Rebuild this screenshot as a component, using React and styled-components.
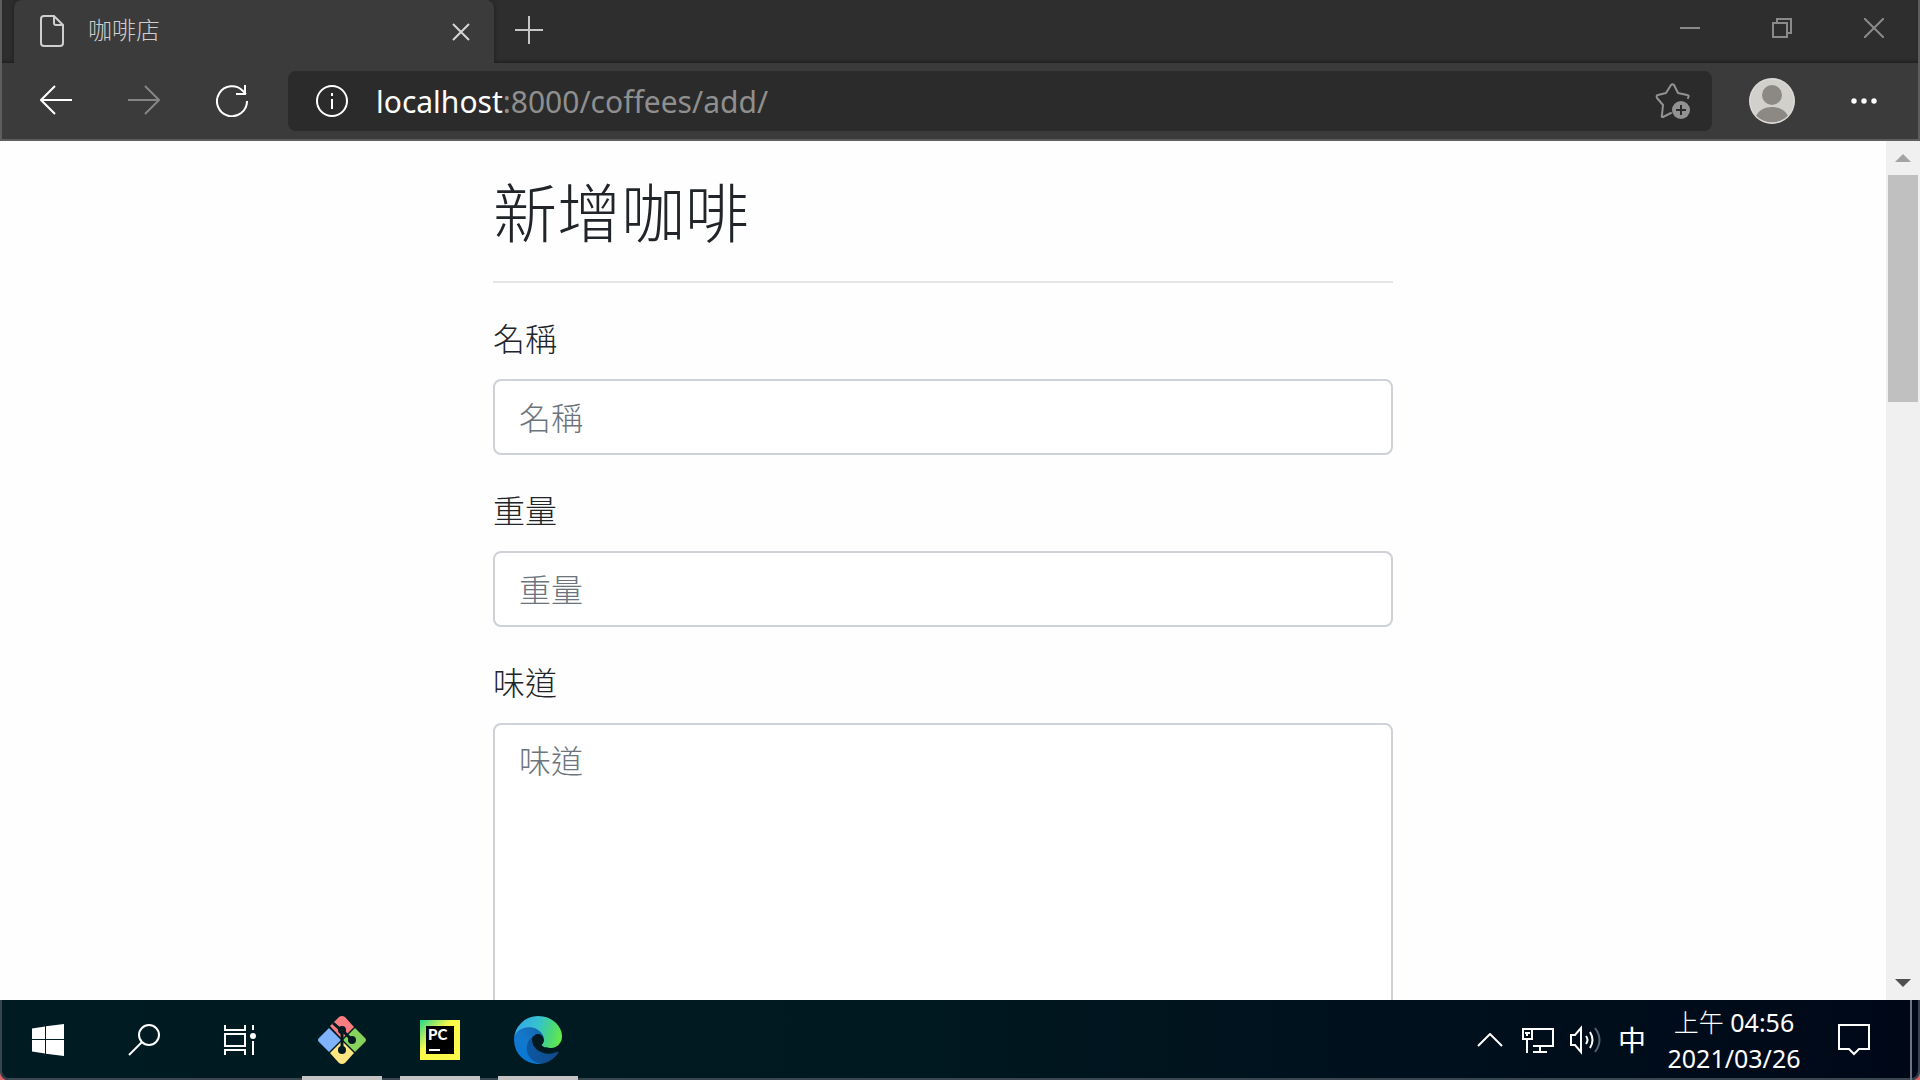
import React from 'react';
import styled, { createGlobalStyle } from 'styled-components';

const Global = createGlobalStyle`
  * { box-sizing: border-box; }
  body { margin: 0; background: #fff; font-family: "Noto Sans", "Noto Sans CJK TC", sans-serif; }
  button { border: 0; padding: 0; background: none; color: inherit; font: inherit; }
  svg { display: block; flex: none; }
`;

const Screen = styled.div`
  display: flex;
  flex-direction: column;
  height: 100vh;
  overflow: hidden;
  background: #e0646c;
`;

const Browser = styled.div`
  flex: 1;
  min-height: 0;
  display: flex;
  flex-direction: column;
`;

const Chrome = styled.header`
  background: #3b3b3b;
  border: solid #5e5e5e;
  border-width: 0 2px 2px;
`;

const TabStrip = styled.div`
  display: flex;
  height: 63px;
  padding-left: 12px;
  background: #2e2e2e;
  box-shadow: inset 0 -2px 2px #232323;
`;

const Tab = styled.div`
  display: flex;
  align-items: center;
  width: 480px;
  padding: 0 24px 0 26px;
  border-radius: 8px 8px 0 0;
  background: #3b3b3b;
  color: #cfcfcf;
  box-shadow: 0 0 4px #1c1c1c;
  clip-path: inset(0 -6px 0 -6px);
`;

const TabTitle = styled.span`
  flex: 1;
  margin: 0 0 6px 24px;
  font: 300 24px/32px "Noto Sans CJK TC Light", "Noto Sans CJK TC", sans-serif;
`;

const IconButton = styled.button`
  display: flex;
  align-items: center;
  justify-content: center;
  width: ${(p) => p.$width || 32}px;
  height: ${(p) => p.$height || 32}px;
  color: ${(p) => p.$color || '#fff'};
`;

const WindowButtons = styled.div`
  display: flex;
  gap: 4px;
  margin-left: auto;
`;

const Toolbar = styled.div`
  display: flex;
  align-items: center;
  height: 76px;
  padding: 0 38px;
`;

const Nav = styled.nav`
  display: flex;
  gap: 56px;
  margin-right: 40px;
`;

const AddressBar = styled.form`
  flex: 1;
  display: flex;
  align-items: center;
  height: 60px;
  margin-right: 37px;
  padding: 0 21px 0 28px;
  border-radius: 8px;
  background: #2b2b2b;
  color: #fff;
`;

const Url = styled.a`
  flex: 1;
  margin-left: 28px;
  padding-top: 2px;
  color: #8f8f8f;
  font-size: 30px;
  line-height: 40px;
  text-decoration: none;
`;

const Host = styled.span`
  color: #fff;
`;

const ToolbarActions = styled.div`
  display: flex;
  align-items: center;
  gap: 53px;
`;

const Viewport = styled.div`
  flex: 1;
  min-height: 0;
  display: flex;
  padding-right: 2px;
  background: #f0f0f0;
`;

const Page = styled.main`
  flex: 1;
  overflow: hidden;
  background: #fefefe;
`;

const Container = styled.form`
  width: 900px;
  margin: 0 auto;
  padding-top: 30px;
  color: #212529;
  font: 300 32px/48px "Noto Sans CJK TC Light", "Noto Sans CJK TC", sans-serif;
`;

const Title = styled.h1`
  margin: 0;
  padding-bottom: 34px;
  border-bottom: 2px solid #e4e5e5;
  font-size: 64px;
  font-weight: 300;
  line-height: 76px;
`;

const Group = styled.div`
  padding-top: 30px;
`;

const Label = styled.label`
  display: block;
  margin-bottom: 18px;
`;

const Input = styled.input`
  display: block;
  width: 100%;
  height: 76px;
  padding: 10px 24px 12px;
  border: 2px solid #ced1d5;
  border-radius: 8px;
  background: #fff;
  color: #495057;
  font: inherit;
  outline: none;
  &::placeholder { color: #6c757d; opacity: 1; }
`;

const TextArea = styled(Input)`
  height: 500px;
  resize: none;
`;

const ScrollBar = styled.aside`
  display: flex;
  flex-direction: column;
  width: 32px;
`;

const Thumb = styled.div`
  width: 30px;
  height: 227px;
  margin-left: 2px;
  margin-bottom: auto;
  background: #c0c0c0;
`;

const Taskbar = styled.footer`
  display: flex;
  height: 80px;
  padding-right: 6px;
  border: solid #38444e;
  border-width: 0 2px;
  border-radius: 0 0 8px 8px;
  background: linear-gradient(90deg, #001b22 0%, #001920 45%, #000f1c 78%, #000818 100%);
  box-shadow: inset 0 -2px #3a4650;
  color: #fff;
`;

const SystemButtons = styled.div`
  display: flex;
  margin-left: -2px;
`;

const Apps = styled.div`
  display: flex;
  gap: 18px;
  padding-left: 14px;
`;

const AppButton = styled(IconButton)`
  width: 80px;
  height: 80px;
  border-bottom: 4px solid #c4c4c4;
  padding-top: 4px;
`;

const Tray = styled.div`
  display: flex;
  align-items: center;
  margin-left: auto;
`;

const TrayIcons = styled.div`
  display: flex;
  align-items: center;
  gap: 16px;
`;

const Ime = styled.button`
  width: 28px;
  height: 80px;
  padding-bottom: 2px;
  font: 28px/78px "Noto Sans CJK TC", sans-serif;
`;

const Clock = styled.time`
  width: 134px;
  margin: 0 37px 0 21px;
  font: 25px/36px "Noto Sans", "Noto Sans CJK TC Light", "Noto Sans CJK TC", sans-serif;
  text-align: center;
  white-space: nowrap;
`;

const ShowDesktop = styled.button`
  width: 2px;
  height: 80px;
  margin-left: 40px;
  background: #6e7480;
`;

const Line = ({ w = 32, h = 32, children }) => (
  <svg width={w} height={h} viewBox={`0 0 ${w} ${h}`} fill="none" stroke="currentColor" strokeWidth="2" aria-hidden="true">
    {children}
  </svg>
);

const DocIcon = () => (
  <Line w={24} h={34}>
    <path d="M4 1h10l9 9v18a3 3 0 0 1-3 3H4a3 3 0 0 1-3-3V4a3 3 0 0 1 3-3zM14 1v7a2 2 0 0 0 2 2h7" />
  </Line>
);

const StarIcon = () => (
  <Line w={36} h={36}>
    <path strokeLinejoin="round" strokeLinecap="round" d="M16 30l-8 4c-1 0-2 0-1-2l1-10-6-7c-1-2 0-3 1-3l8-2 5-8c1-1 2-1 3 0l4 8 9 2c2 0 2 1 1 3" />
    <circle cx="26" cy="27" r="9" fill="currentColor" stroke="none" />
    <path stroke="#2b2b2b" d="M21 27h10M26 22v10" />
  </Line>
);

const Avatar = () => (
  <svg width="46" height="46" viewBox="0 0 46 46" aria-hidden="true">
    <circle cx="23" cy="23" r="23" fill="#d2d0cc" />
    <circle cx="23" cy="17" r="10" fill="#8c8884" />
    <path d="M7 38c3-6 9-9 16-9s13 3 16 9a23 23 0 0 1-32 0z" fill="#8c8884" />
    <circle cx="23" cy="23" r="22" fill="none" stroke="#dddcd9" />
  </svg>
);

const GitIcon = () => (
  <svg width="48" height="48" viewBox="0 0 48 48" aria-hidden="true">
    <path d="M21 1q3-2 6 0l9 10-12 12L12 10z" fill="#f87d80" />
    <path d="M11 12l12 12-12 12L1 26q-2-2 0-4z" fill="#80b3ff" />
    <path d="M37 12l10 10q2 2 0 4L37 36 25 24z" fill="#87d45c" />
    <path d="M24 25l12 12-9 10q-3 2-6 0L12 37z" fill="#ffe680" />
    <path d="M15 7l9 8v19M24 14l10 10" fill="none" stroke="#001a21" strokeWidth="3" />
    <g fill="#001a21"><circle cx="24" cy="14" r="4" /><circle cx="34" cy="24" r="4" /><circle cx="24" cy="34" r="4" /></g>
  </svg>
);

const PyCharmIcon = () => (
  <svg width="40" height="40" viewBox="0 0 40 40" aria-hidden="true">
    <defs>
      <linearGradient id="pc" x1="0" y1="0" x2="1" y2="1">
        <stop offset="0" stopColor="#21d789" /><stop offset=".4" stopColor="#fcf84a" /><stop offset="1" stopColor="#fcf84a" />
      </linearGradient>
    </defs>
    <rect width="40" height="40" fill="url(#pc)" />
    <rect x="6" y="6" width="28" height="28" fill="#000" />
    <text x="8" y="20" fill="#fff" fontFamily="Lato, sans-serif" fontWeight="900" fontSize="15">PC</text>
    <rect x="9" y="29" width="11" height="2" fill="#fff" />
  </svg>
);

const EdgeIcon = () => (
  <svg width="48" height="48" viewBox="0 0 256 256" aria-hidden="true">
    <defs>
      <linearGradient id="e1" x1="60" y1="177" x2="240" y2="177" gradientUnits="userSpaceOnUse"><stop offset="0" stopColor="#0c59a4" /><stop offset="1" stopColor="#114a8b" /></linearGradient>
      <linearGradient id="e2" x1="150" y1="100" x2="45" y2="215" gradientUnits="userSpaceOnUse"><stop offset="0" stopColor="#1469b4" /><stop offset=".5" stopColor="#1478ca" /><stop offset="1" stopColor="#0b78d4" /></linearGradient>
      <linearGradient id="e3" x1="10" y1="60" x2="250" y2="130" gradientUnits="userSpaceOnUse"><stop offset="0" stopColor="#35a8e8" /><stop offset=".45" stopColor="#36c3cc" /><stop offset=".75" stopColor="#49d779" /><stop offset="1" stopColor="#66eb46" /></linearGradient>
    </defs>
    <path fill="url(#e1)" d="M231 190.500a93.700 93.700 0 0 1-10.600 4.700 101.900 101.900 0 0 1-35.900 6.400c-47.300 0-88.500-32.500-88.500-74.300a31.500 31.500 0 0 1 16.400-27.300c-42.800 1.800-53.800 46.400-53.800 72.500 0 74 68.100 81.400 82.800 81.400 7.900 0 19.800-2.300 27-4.600l1.300-.4a128.300 128.300 0 0 0 66.600-52.800 4 4 0 0 0-5.300-5.600z" />
    <path fill="url(#e2)" d="M105.700 241.400a79.200 79.200 0 0 1-22.700-21.300 80.700 80.700 0 0 1 29.500-120c3.100-1.500 8.500-4.100 15.600-4a32.400 32.400 0 0 1 25.700 13 31.900 31.900 0 0 1 6.300 18.700c0-.2 24.500-79.600-80-79.600-43.900 0-80 41.600-80 78.200a130.200 130.200 0 0 0 12.100 56 128 128 0 0 0 156.400 67 75.500 75.500 0 0 1-62.800-8z" />
    <path fill="url(#e3)" d="M152.300 148.900c-.8 1-3.300 2.500-3.300 5.700 0 2.600 1.700 5.100 4.700 7.200 14.400 10 41.500 8.700 41.600 8.700a59.600 59.600 0 0 0 30.300-8.300 61.400 61.400 0 0 0 30.400-52.900c.3-22.400-8-37.300-11.300-43.900C223.500 23.900 177.700 0 128 0A128 128 0 0 0 0 126.200c.5-36.500 36.800-66 80-66 3.500 0 23.500.3 42 10.100 16.300 8.600 24.900 19 30.800 29.200 6.200 10.700 7.300 24.100 7.300 29.500s-2.700 13.300-7.800 19.900z" />
  </svg>
);

const FormField = ({ id, label, multiline }) => (
  <Group>
    <Label htmlFor={id}>{label}</Label>
    {multiline ? <TextArea as="textarea" id={id} placeholder={label} /> : <Input id={id} placeholder={label} />}
  </Group>
);

export default function App() {
  return (
    <Screen>
      <Global />
      <Browser>
        <Chrome>
          <TabStrip>
            <Tab>
              <DocIcon />
              <TabTitle>咖啡店</TabTitle>
              <IconButton $width={18} $color="#d6d6d6" aria-label="關閉分頁">
                <Line w={18} h={18}><path d="M1 1l16 16M17 1L1 17" /></Line>
              </IconButton>
            </Tab>
            <IconButton $width={70} $height={60} $color="#c6c6c6" aria-label="新分頁">
              <Line w={28} h={28}><path d="M0 14h28M14 0v28" /></Line>
            </IconButton>
            <WindowButtons>
              <IconButton $width={88} $height={56} $color="#8a8a8a" aria-label="最小化">
                <Line w={20} h={20}><path d="M0 10h20" /></Line>
              </IconButton>
              <IconButton $width={88} $height={56} $color="#8a8a8a" aria-label="還原">
                <Line w={20} h={20}><path d="M1 5h14v14H1zM5 5V1h14v14h-4" /></Line>
              </IconButton>
              <IconButton $width={88} $height={56} $color="#8a8a8a" aria-label="關閉">
                <Line w={20} h={20}><path d="M0 0l20 20M20 0L0 20" /></Line>
              </IconButton>
            </WindowButtons>
          </TabStrip>
          <Toolbar>
            <Nav>
              <IconButton aria-label="上一頁">
                <Line><path d="M15 1L1 15l14 14M1 15h31" /></Line>
              </IconButton>
              <IconButton $color="#858585" aria-label="下一頁">
                <Line><path d="M17 1l14 14-14 14M31 15H0" /></Line>
              </IconButton>
              <IconButton aria-label="重新整理">
                <Line><path d="M31 16A15 15 0 1 1 27 6l3 3M29 0v9h-9" /></Line>
              </IconButton>
            </Nav>
            <AddressBar>
              <Line><circle cx="16" cy="16" r="15" /><path d="M16 14v10M16 8v3" /></Line>
              <Url href="#"><Host>localhost</Host>:8000/coffees/add/</Url>
              <IconButton type="button" $width={36} $color="#929292" aria-label="加入我的最愛"><StarIcon /></IconButton>
            </AddressBar>
            <ToolbarActions>
              <IconButton $width={46} $height={46} aria-label="使用者"><Avatar /></IconButton>
              <IconButton aria-label="設定">
                <svg width="28" height="6" viewBox="0 0 28 6" fill="currentColor" aria-hidden="true">
                  <circle cx="4" cy="3" r="2.700" /><circle cx="14" cy="3" r="2.700" /><circle cx="24" cy="3" r="2.700" />
                </svg>
              </IconButton>
            </ToolbarActions>
          </Toolbar>
        </Chrome>
        <Viewport>
          <Page>
            <Container>
              <Title>新增咖啡</Title>
              <FormField id="name" label="名稱" />
              <FormField id="weight" label="重量" />
              <FormField id="flavor" label="味道" multiline />
            </Container>
          </Page>
          <ScrollBar>
            <IconButton $width={34} $height={34} $color="#a3a3a3" aria-label="向上捲動">
              <svg width="16" height="8" viewBox="0 0 16 8" fill="currentColor" aria-hidden="true"><path d="M8 0l8 8H0z" /></svg>
            </IconButton>
            <Thumb />
            <IconButton $width={34} $height={34} $color="#505050" aria-label="向下捲動">
              <svg width="16" height="8" viewBox="0 0 16 8" fill="currentColor" aria-hidden="true"><path d="M8 8l8-8H0z" /></svg>
            </IconButton>
          </ScrollBar>
        </Viewport>
      </Browser>
      <Taskbar>
        <SystemButtons>
          <IconButton $width={96} $height={80} aria-label="開始">
            <svg width="32" height="32" viewBox="0 0 32 32" fill="#fff" aria-hidden="true">
              <path d="M0 4.500l13-2V15H0zM14 2.300L32 0v15H14zM0 16h13v13.500l-13-2zM14 16h18v16l-18-2.300z" />
            </svg>
          </IconButton>
          <IconButton $width={96} $height={80} aria-label="搜尋">
            <Line><circle cx="21" cy="11" r="10" /><path d="M14 18L1 31" /></Line>
          </IconButton>
          <IconButton $width={96} $height={80} aria-label="工作檢視">
            <Line><path d="M1 1v5h20V1M1 10h20v12H1zM1 31v-5h20v5M29 1v5M29 17v14" /><circle cx="29" cy="12" r="3" fill="currentColor" stroke="none" /></Line>
          </IconButton>
        </SystemButtons>
        <Apps>
          <AppButton aria-label="Git"><GitIcon /></AppButton>
          <AppButton aria-label="PyCharm"><PyCharmIcon /></AppButton>
          <AppButton aria-label="Edge"><EdgeIcon /></AppButton>
        </Apps>
        <Tray>
          <TrayIcons>
            <IconButton aria-label="顯示隱藏的圖示">
              <Line w={26} h={14}><path d="M1 13L13 1l12 12" /></Line>
            </IconButton>
            <IconButton aria-label="網路">
              <Line><path d="M10 5h21v17H11M1 5h9v10H1zM5 15v14M18 22v6M11 28h14M3 9h5" /><path d="M5 9v3" /></Line>
            </IconButton>
            <IconButton aria-label="音量">
              <Line><path d="M1 11h4l6-7v24l-6-7H1z" /><path d="M16 12q3 4 0 8M20 8q5 8 0 16" /><path d="M25 4q9 12 0 24" opacity=".35" /></Line>
            </IconButton>
            <Ime>中</Ime>
          </TrayIcons>
          <Clock>上午 04:56<br />2021/03/26</Clock>
          <IconButton aria-label="通知">
            <Line><path d="M1 1h30v24H21l-5 5-5-5H1z" /></Line>
          </IconButton>
          <ShowDesktop aria-label="顯示桌面" />
        </Tray>
      </Taskbar>
    </Screen>
  );
}
